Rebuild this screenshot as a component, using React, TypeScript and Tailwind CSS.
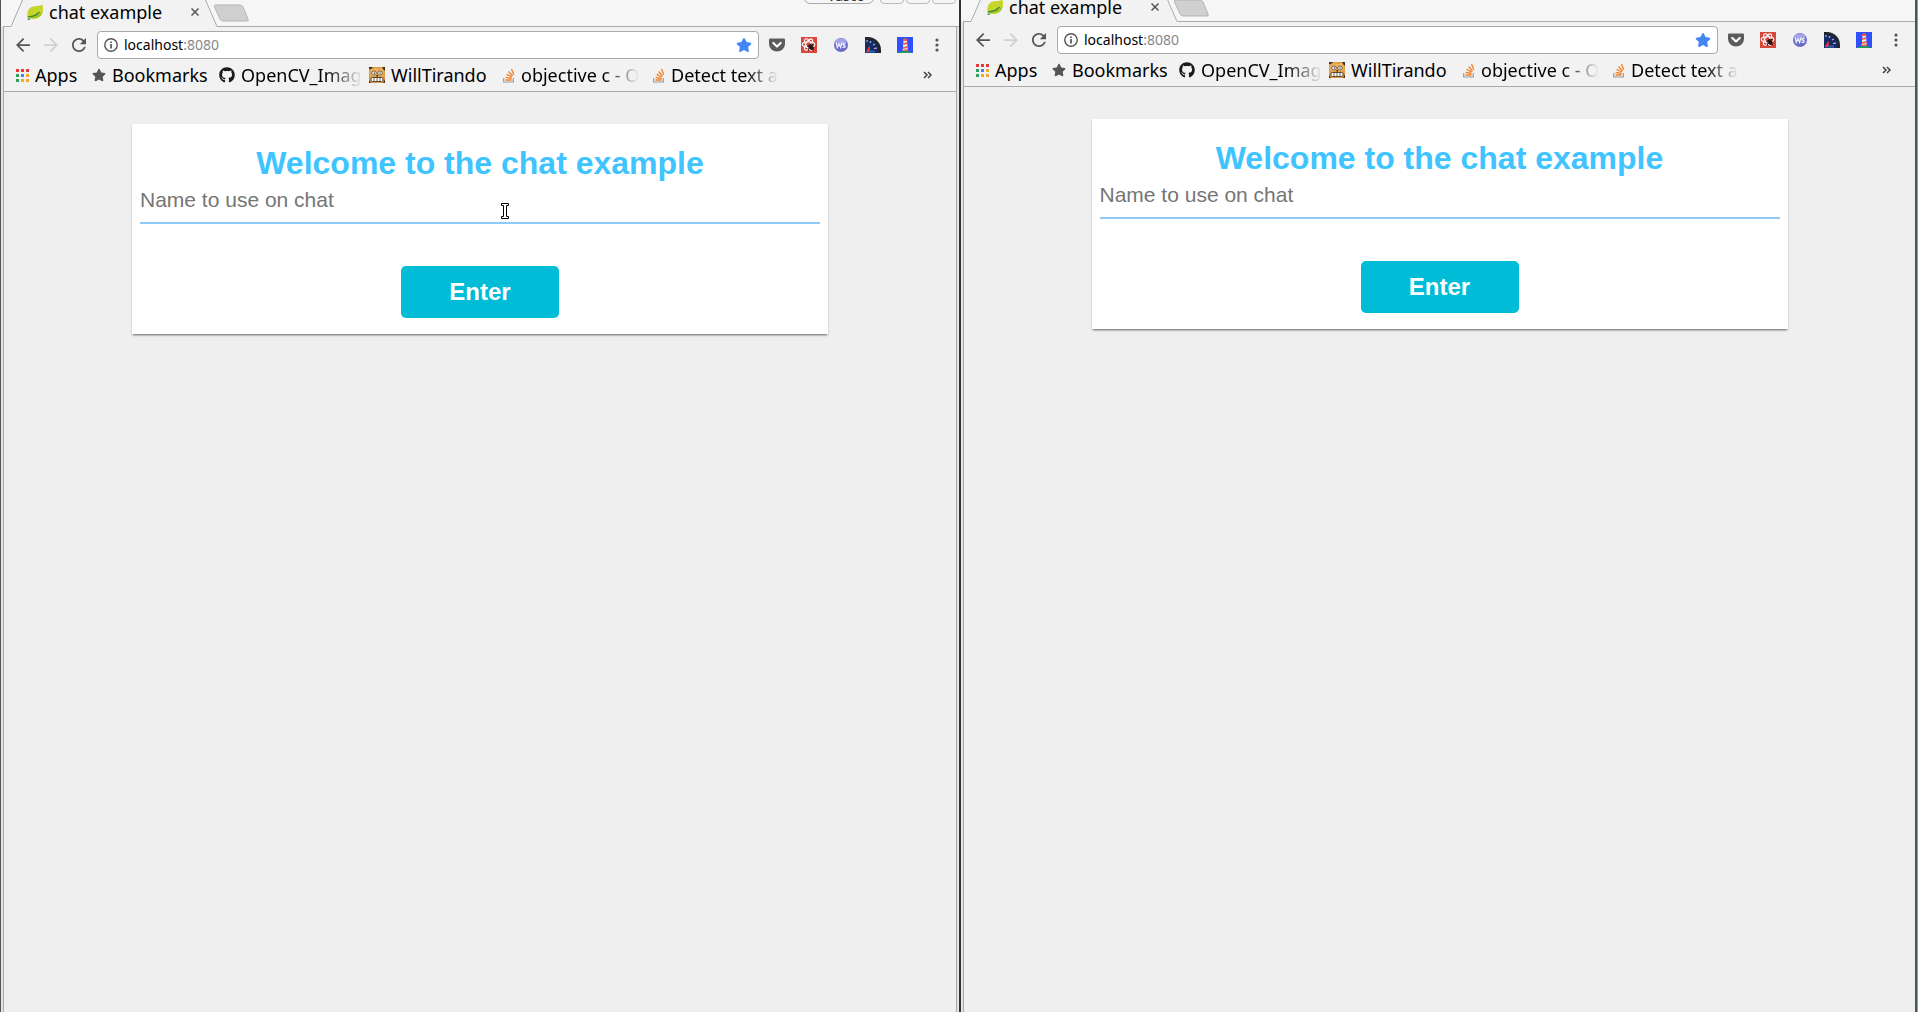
import React, { useId } from "react";
import { FaGithub, FaStar } from "react-icons/fa";

type BookmarkData = { label: string; icon: React.ReactNode; width: string; fade?: boolean };

function LeafIcon() {
  return (
    <svg viewBox="0 0 16 16" className="h-4 w-4 shrink-0">
      <path d="M15.500 .5C13 2.500 9 1.500 4.500 3 1 4.500-.500 9 1 13.500c4 2.500 10 2 13-2 2.300-3 2.300-7 1.500-11z" fill="#c6d52a" />
      <path d="M2 13c5 2 9.500 1 12-1.500l1.700-4.500C12 11 8 12.500 2 13z" fill="#a5c424" />
      <path d="M.5 13c5-.2 9-1.500 12-5M.5 15.200h2.500" stroke="#2f8a3a" strokeWidth="1.200" fill="none" />
    </svg>
  );
}

function ArrowIcon() {
  return (
    <svg viewBox="4 4 16 16" className="h-3.5 w-3.5" fill="currentColor">
      <path d="M20 11H7.830l5.590-5.590L12 4l-8 8 8 8 1.410-1.410L7.830 13H20v-2z" />
    </svg>
  );
}

function ReloadIcon() {
  return (
    <svg viewBox="4 4 16 16" className="h-3.5 w-3.5" fill="currentColor">
      <path d="M17.650 6.350C16.200 4.900 14.210 4 12 4c-4.420 0-7.990 3.580-7.990 8s3.570 8 7.990 8c3.730 0 6.840-2.550 7.730-6h-2.080c-.820 2.330-3.040 4-5.650 4-3.310 0-6-2.690-6-6s2.690-6 6-6c1.660 0 3.140.690 4.220 1.780L13 11h7V4l-2.350 2.350z" />
    </svg>
  );
}

function InfoIcon() {
  return (
    <svg viewBox="0 0 14 14" className="h-3.5 w-3.5 shrink-0">
      <circle cx="7" cy="7" r="6.200" fill="none" stroke="#555" strokeWidth="1.400" />
      <path d="M6.200 6h1.700v4.500H6.200zM6.200 3.400h1.700V5H6.200z" fill="#555" />
    </svg>
  );
}

function AppsIcon() {
  const colors = ["#e53935", "#e53935", "#e53935", "#2e9e5b", "#4285f4", "#f9a825", "#2e9e5b", "#f9a825", "#f9a825"];
  return (
    <svg viewBox="0 0 13 13" className="h-[13px] w-[13px] shrink-0">
      {colors.map((c, i) => (
        <rect key={i} x={(i % 3) * 5} y={Math.floor(i / 3) * 5} width="3" height="3" fill={c} />
      ))}
    </svg>
  );
}

function StackIcon() {
  return (
    <svg viewBox="0 0 12 15" className="h-[15px] w-3 shrink-0" fill="none">
      <path d="M.7 10v4h9.600v-4" stroke="#9a9a9a" strokeWidth="1.200" />
      <path d="M2.500 12h6M2.600 9.300l6 1.200M3.600 6.300l5.300 2.700M5.600 3.500l4 4.500M8.500 1l2.300 5.800" stroke="#f48024" strokeWidth="1.300" />
    </svg>
  );
}

function ComicIcon() {
  return (
    <svg viewBox="0 0 16 16" className="h-4 w-4 shrink-0">
      <path d="M0 0h16v16H0z" fill="#dc9c4a" />
      <path d="M0 0h4L2 2H0zM13 0h3v4l-2-2zM0 13l2 3H0zM16 12v4h-2z" fill="#4a2f14" />
      <path d="M2 3l4-2 3 1 4-1 2 4-1 4H2L1 6z" fill="#eeb360" />
      <ellipse cx="5" cy="6" rx="2.400" ry="2" fill="#e6e6e6" stroke="#6b4a28" strokeWidth=".8" />
      <ellipse cx="11" cy="6" rx="2.400" ry="2" fill="#e6e6e6" stroke="#6b4a28" strokeWidth=".8" />
      <path d="M5 5.500h1v1H5zM10.500 5.500h1v1h-1zM7.500 8h1.500v1.500H7.500z" fill="#222" />
      <rect x="2" y="10.500" width="12" height="4" rx="1.500" fill="#fff" stroke="#3b2a18" strokeWidth=".8" />
      <path d="M5 10.500v4M8 10.500v4M11 10.500v4" stroke="#3b2a18" strokeWidth=".7" />
    </svg>
  );
}

function PocketIcon() {
  return (
    <svg viewBox="0 0 16 16" className="h-4 w-4">
      <path d="M1 1.500h14q1 0 1 1V7a8 7.500 0 0 1-16 0V2.500q0-1 1-1z" fill="#5c5c5c" />
      <path d="M4.300 6L8 9.500 11.700 6" fill="none" stroke="#fff" strokeWidth="2.200" strokeLinecap="round" strokeLinejoin="round" />
    </svg>
  );
}

function ReactBugIcon() {
  return (
    <svg viewBox="0 0 16 16" className="h-4 w-4">
      <path d="M0 0h16v16H0z" fill="#d9463a" />
      <g fill="none" stroke="#fff" strokeWidth="1.100">
        <ellipse cx="7.500" cy="7.500" rx="6.300" ry="2.700" />
        <ellipse cx="7.500" cy="7.500" rx="6.300" ry="2.700" transform="rotate(60 7.500 7.500)" />
        <ellipse cx="7.500" cy="7.500" rx="6.300" ry="2.700" transform="rotate(120 7.500 7.500)" />
      </g>
      <ellipse cx="10" cy="10" rx="2.300" ry="3.200" fill="#2a1512" transform="rotate(-35 10 10)" />
      <path d="M6 9l7 4M7 13l5-6M10 7l3 1M8 14l-1-3" stroke="#2a1512" strokeWidth=".8" />
    </svg>
  );
}

function SocketIcon() {
  return (
    <svg viewBox="0 0 16 16" className="h-4 w-4">
      <circle cx="8" cy="8" r="7" fill="#6a6cc9" />
      <ellipse cx="8" cy="5" rx="5.500" ry="3.500" fill="#a3a5e6" />
      <path d="M3 5.500l1.300 5L6 7l1.600 3.500L9 5.500M12.500 7q-2.500-.8-2.300.6.200 1 1.600 1.100 1.200 1-.6 1.700-.9.100-1.700-.300" fill="none" stroke="#f2f2ff" strokeWidth="1.200" />
    </svg>
  );
}

function GaugeIcon() {
  return (
    <svg viewBox="0 0 16 16" className="h-4 w-4">
      <path d="M0 0h3a13 13 0 0 1 13 13v3H0z" fill="#23252e" />
      <path d="M0 3a11 11 0 0 1 13 13H0z" fill="#162a66" />
      <path d="M2 3v2M6 4l-1 2M10 7L8 8M12 11l-3 .5" stroke="#c6d0ef" />
      <path d="M1 14.500h9" stroke="#2d62b3" strokeWidth="2" />
      <path d="M4.500 8.500L5 13l-2 2H1z" fill="#ed3c2e" />
    </svg>
  );
}

function LighthouseIcon() {
  return (
    <svg viewBox="0 0 16 16" className="h-4 w-4">
      <path d="M0 0h16v16H0z" fill="#304ffe" />
      <path d="M0 16q8-4 16 0z" fill="#1f9d57" />
      <path d="M6.500 4h3.500l.8 10H5.700z" fill="#f5f5f5" />
      <path d="M6 2.500L8.200 1l2.300 1.500V4H6zM6.200 6l4-1v2l-4 1zM6 10l4.500-1v2L6 12zM5.800 13l5-1v2h-5z" fill="#ef5b3c" />
    </svg>
  );
}

const extensions = [
  { name: "Pocket", icon: <PocketIcon /> },
  { name: "React tools", icon: <ReactBugIcon /> },
  { name: "WebSocket client", icon: <SocketIcon /> },
  { name: "Speed test", icon: <GaugeIcon /> },
  { name: "Lighthouse", icon: <LighthouseIcon /> },
];

const bookmarks: BookmarkData[] = [
  { label: "Apps", icon: <AppsIcon />, width: "w-[76px]" },
  { label: "Bookmarks", icon: <FaStar className="h-3.5 w-3.5 shrink-0 text-[#555]" />, width: "w-[127px]" },
  { label: "OpenCV_Imag", icon: <FaGithub className="h-4 w-4 shrink-0 text-[#1b1b1b]" />, width: "w-[150px]", fade: true },
  { label: "WillTirando", icon: <ComicIcon />, width: "w-[134px]" },
  { label: "objective c - O", icon: <StackIcon />, width: "w-[150px]", fade: true },
  { label: "Detect text a", icon: <StackIcon />, width: "w-[150px]", fade: true },
];

function TabStrip({ controls }: { controls?: boolean }) {
  return (
    <div
      className={`relative flex shrink-0 items-end overflow-hidden bg-[#f6f6f6] pl-[2px] ${controls ? "h-[27px]" : "h-[22px]"}`}
    >
      <div className="h-px w-2 bg-[#aaa]" />
      <div className="flex h-[27px] items-stretch">
        <svg viewBox="0 0 12 27" className="h-[27px] w-3">
          <path d="M0 26.500L12 0V27H0z" fill="#f2f2f2" />
          <path d="M0 26.500L11.500 0" stroke="#aaa" fill="none" />
        </svg>
        <div className="flex w-[182px] items-center gap-1.5 bg-[#f2f2f2] pb-1 pl-1">
          <LeafIcon />
          <span className="grow text-lg leading-6 whitespace-nowrap">chat example</span>
          <button aria-label="Close tab" className="mr-1 p-0.5">
            <svg viewBox="0 0 8 8" className="h-2 w-2">
              <path d="M.5.500l7 7M7.500.500l-7 7" stroke="#555" strokeWidth="1.500" />
            </svg>
          </button>
        </div>
        <svg viewBox="0 0 12 27" className="h-[27px] w-3">
          <path d="M0 0L12 26.500V27H0z" fill="#f2f2f2" />
          <path d="M.5 0L12 26.500" stroke="#aaa" fill="none" />
        </svg>
      </div>
      <div className="flex h-[27px] grow border-b border-[#aaa]">
        <button aria-label="New tab" className="-ml-1 h-[22px] pt-1">
          <svg viewBox="0 0 36 18" className="h-[18px] w-9">
            <path d="M2.500 1H27q2 0 3 2l5 12q1 2-1 2H10q-2 0-3-2L1.500 3Q1 1 2.500 1z" fill="#d0d0d0" stroke="#b5b5b5" />
          </svg>
        </button>
      </div>
      {controls && (
        <div className="absolute -top-[17px] right-[3px] flex h-[21px] gap-[2px] text-sm">
          <button className="mr-1 flex w-[70px] items-end justify-end rounded-b-md border border-[#aaa] pr-2 leading-[14px] text-[#333]">
            Vasco
          </button>
          <button aria-label="Minimize" className="w-6 rounded-b-sm border border-[#bbb]" />
          <button aria-label="Maximize" className="w-6 rounded-b-sm border border-[#bbb]" />
          <button aria-label="Close window" className="w-6 rounded-b-sm border border-[#bbb]" />
        </div>
      )}
    </div>
  );
}

function Toolbar() {
  return (
    <div className="flex h-9 items-center bg-[#f2f2f2] pr-[11px] pl-3 text-[#555]">
      <div className="flex gap-3.5">
        <button aria-label="Back">
          <ArrowIcon />
        </button>
        <button aria-label="Forward" className="rotate-180 text-[#d0d0d0]">
          <ArrowIcon />
        </button>
        <button aria-label="Reload">
          <ReloadIcon />
        </button>
      </div>
      <div className="ml-[11px] flex h-7 grow items-center rounded border border-[#a9a9a9] bg-white px-1.5 text-sm">
        <InfoIcon />
        <div className="ml-1.5 grow text-black">
          localhost<span className="text-[#888]">:8080</span>
        </div>
        <button aria-label="Edit bookmark">
          <FaStar className="h-3.5 w-4 text-[#4285f4]" />
        </button>
      </div>
      <div className="ml-2.5 flex gap-4">
        {extensions.map((e) => (
          <button key={e.name} aria-label={e.name}>
            {e.icon}
          </button>
        ))}
        <button aria-label="Menu">
          <svg viewBox="0 0 16 16" className="h-4 w-4" fill="#555">
            <circle cx="8" cy="3" r="1.600" />
            <circle cx="8" cy="8" r="1.600" />
            <circle cx="8" cy="13" r="1.600" />
          </svg>
        </button>
      </div>
    </div>
  );
}

function BookmarksBar() {
  return (
    <nav className="flex h-[29px] items-center border-b border-[#aaa] bg-[#f2f2f2] pr-6 pb-1 pl-3 text-lg leading-6">
      {bookmarks.map((b) => (
        <a key={b.label} href="#" className={`flex shrink-0 items-center gap-1.5 ${b.width}`}>
          {b.icon}
          <span
            className={`whitespace-nowrap ${
              b.fade ? "bg-linear-to-r from-black from-70% to-transparent bg-clip-text text-transparent" : ""
            }`}
          >
            {b.label}
          </span>
        </a>
      ))}
      <button aria-label="More bookmarks" className="ml-auto">
        <svg viewBox="0 0 9 8" className="h-2 w-[9px]">
          <path d="M1 1l3 3-3 3M5 1l3 3-3 3" fill="none" stroke="#444" strokeWidth="1.500" />
        </svg>
      </button>
    </nav>
  );
}

function TextCursor() {
  return (
    <svg viewBox="0 0 8 16" className="absolute top-[21px] left-[361px] h-4 w-2">
      <path d="M.5.500h7v2h-2v11h2v2h-7v-2h2v-11h-2z" fill="#fff" stroke="#000" />
    </svg>
  );
}

function WelcomeCard({ cursor }: { cursor?: boolean }) {
  const id = useId();
  return (
    <form
      onSubmit={(e) => e.preventDefault()}
      className="flex w-full max-w-[696px] flex-col bg-white px-2 pt-5 pb-4 font-['Liberation_Sans',Arial,sans-serif] shadow-[0_2px_2px_-1px_rgba(0,0,0,0.500),0_1px_2px_rgba(0,0,0,0.150)]"
    >
      <h1 className="text-center text-[32px] leading-[38px] font-bold text-[#40c4ff]">Welcome to the chat example</h1>
      <div className="relative">
        <label htmlFor={id} className="sr-only">
          Name
        </label>
        <input
          id={id}
          type="text"
          placeholder="Name to use on chat"
          className="block h-[42px] w-full border-b-2 border-[#90caf9] pb-1 text-[21px] outline-none placeholder:text-[#757575]"
        />
        {cursor && <TextCursor />}
      </div>
      <button type="submit" className="mt-[42px] h-[52px] w-[158px] self-center rounded-[5px] bg-[#00bcd7] text-2xl font-bold text-white">
        Enter
      </button>
    </form>
  );
}

function BrowserWindow({ first }: { first?: boolean }) {
  return (
    <section
      className={`flex min-w-0 flex-col border-l bg-[#e4e4e4] ${first ? "border-r border-r-[#333] border-l-[#555]" : "border-r-2 border-r-[#46575e] border-l-[#333]"}`}
    >
      <TabStrip controls={first} />
      <div className={`ml-[2px] flex grow flex-col border-l border-[#aaa] bg-[#efefef] ${first ? "mr-[2px] border-r" : ""}`}>
        <Toolbar />
        <BookmarksBar />
        <main className="flex justify-center px-4 pt-8">
          <WelcomeCard cursor={first} />
        </main>
      </div>
    </section>
  );
}

export default function App() {
  return (
    <div className="grid min-h-screen grid-cols-[960fr_957fr] bg-[#999] pr-px font-['Noto_Sans','Open_Sans',sans-serif] text-black">
      <BrowserWindow first />
      <BrowserWindow />
    </div>
  );
}
